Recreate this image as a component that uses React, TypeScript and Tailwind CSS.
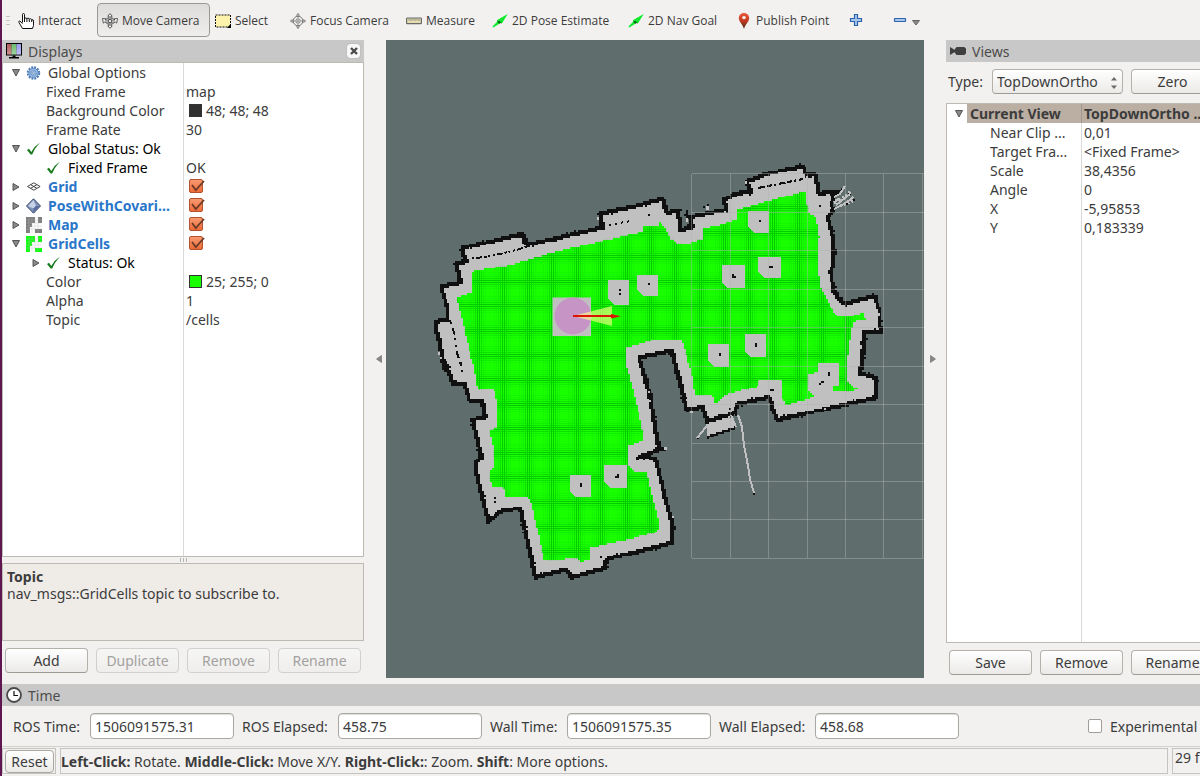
import React from "react";

/* ---------- occupancy map ---------- */

type Point = [number, number];
const CELL = 1.92;
const LEFT = 386;
const TOP = 40;

const WALL: Point[] = [
  [445, 370], [440.7, 350], [436.7, 331.7], [436, 321.7], [448, 320], [446.7, 306.7], [441.7, 290], [443, 286],
  [460.7, 282.3], [457, 268], [456, 264], [466.7, 261], [461.5, 250], [463, 247.7], [523, 234], [526.7, 245],
  [566.7, 235.7], [602.7, 227.7], [600, 213.3], [633, 206.7], [663.3, 199], [667.3, 212.7], [678, 210],
  [680, 230], [692.7, 227.3], [690, 216.7], [726.7, 209.3], [723.3, 200], [736.7, 193.3], [751.7, 191.7],
  [746, 181.7], [770, 173.3], [803, 166], [806, 175], [815, 174], [819, 193], [836.7, 191.7], [831.7, 203],
  [833, 210], [827.3, 216.7], [834, 240], [834, 265], [830, 271.7], [835, 293], [843.3, 304], [874, 296.7],
  [879.3, 310], [880.7, 331.7], [865, 331], [864, 340], [862.7, 360], [860, 373.3], [876, 378], [875, 398],
  [843, 405], [803.3, 414], [776.7, 420], [769, 397.3], [736.7, 404], [736, 412.7], [707, 421.7], [702, 406.7],
  [686.7, 410], [671.7, 350.7], [639.3, 357.3], [650, 396.7], [658, 446.7], [661, 449], [640, 456.7],
  [655, 458], [673, 526.7], [672, 542.7], [606.7, 559.3], [605, 568], [571.7, 577], [566.7, 569], [535, 577],
  [520.7, 508], [500, 511.7], [488, 521.7], [476, 470], [476.7, 461.7], [481.7, 458], [473, 420],
  [485, 416.7], [482.7, 401.7], [470, 401.7], [464, 383], [453, 383], [446, 363],
];

const FREE: Point[] = [
  [471.7, 275], [475, 271], [506.7, 265.7], [553, 252.7], [601.7, 241], [642.7, 231.7], [643, 227], [658, 226.7],
  [659, 222.7], [666.7, 230], [670, 238], [676.7, 243], [690, 243], [702, 239], [702.7, 229], [721.7, 225],
  [736.7, 220], [737, 210], [761.7, 203], [806, 190.7], [808, 211.7], [815.7, 216.7], [819, 236.7],
  [817.7, 266.7], [820, 285], [830, 306.7], [838, 316], [853, 316], [863, 313], [865.7, 320], [852.7, 321.7],
  [848, 350], [846.7, 380], [853, 386.7], [861.7, 386.7], [851.7, 391.7], [833, 391.7], [833, 386.7],
  [838.7, 385], [838.7, 363], [817.7, 363], [817.7, 372], [808, 375], [808, 390], [815, 396.7], [786.7, 405],
  [781, 396.7], [781, 380.7], [758, 380.7], [757.7, 386], [725, 395], [716, 405], [712.7, 396], [695, 395],
  [691.7, 373], [681.7, 340], [653, 340], [626.7, 348], [626.7, 366.7], [633, 390], [643, 431.7], [644, 441],
  [628, 446], [627.5, 465], [635, 471.7], [646.7, 473], [659, 523], [657, 531.7], [626.7, 540], [590, 547.7],
  [589, 560], [580, 562], [576.7, 559], [544, 560], [530, 498], [505, 497], [504, 488], [491.7, 486.7],
  [489, 471.7], [492.7, 468], [492.7, 446.7], [489, 430], [496.7, 428], [496.7, 400], [494, 390], [478, 389],
  [473, 363], [470, 353], [461.7, 318], [456.7, 298], [471.7, 293],
];

const ANNEX: Point[] = [[706, 421], [731.7, 415], [736, 427], [706.7, 437]];

const THIN_WALLS: Point[][] = [
  [[706.7, 437.5], [735, 427.5]],
  [[833, 193], [842, 190]],
  [[656, 449], [666, 449]],
  [[636, 459], [650, 455]],
];

const ISLANDS = [
  [608.3, 280.3, 21, 25], [637.3, 275, 21, 21], [748.3, 211.3, 21, 21.4], [758.3, 257.3, 22.7, 21],
  [721.7, 265.3, 23, 22.7], [708.3, 344, 21, 22.7], [744.7, 334.3, 21, 23], [569.7, 475, 21.3, 22.4],
  [604.3, 465.3, 23, 22.4],
];

const DOTS = [
  [619, 289, 2, 2], [619, 293, 2, 2], [648, 283, 2, 2], [759, 220, 2, 2], [769, 266, 4, 2], [732, 274, 2, 4],
  [734, 276, 2, 2], [719, 353, 2, 3], [755, 343, 2, 4], [580, 483, 2, 4], [615, 476, 4, 2], [617, 474, 2, 2],
  [648, 214, 2, 2], [819, 205, 2, 2], [494, 497, 2, 2], [494, 501, 2, 2], [600, 556, 2, 2], [770, 389, 4, 2],
  [828, 372, 2, 4], [819, 383, 2, 2], [821, 381, 3, 2], [460, 362, 2, 4], [461, 370, 2, 2], [729, 408, 2, 2],
  [753, 492, 2, 3], [697, 437, 2, 2], [686, 210, 2, 8], [684, 214, 2, 2], [707, 204, 2, 4], [703, 206, 2, 2],
  [848, 193, 3, 2], [853, 199, 2, 2], [846, 203, 2, 2],
];

const SCANS = [
  [438, 352, 2, 3], [440, 357, 2, 2], [597, 217, 2, 3], [686, 218, 2, 4], [706, 206, 3, 4], [648, 391, 2, 2],
  [649, 400, 2, 2], [664, 447, 3, 3], [672, 516, 2, 2], [745, 181, 2, 3], [878, 313, 2, 3], [690, 411, 3, 2],
  [824, 408, 2, 2],
];

const edges = (poly: Point[], closed: boolean) => {
  const out: [Point, Point][] = [];
  for (let i = 0; i + 1 < poly.length; i++) out.push([poly[i], poly[i + 1]]);
  if (closed) out.push([poly[poly.length - 1], poly[0]]);
  return out;
};

const inside = (x: number, y: number, segs: [Point, Point][]) => {
  let hit = false;
  for (const [[x1, y1], [x2, y2]] of segs) {
    if (y1 > y !== y2 > y && x < ((x2 - x1) * (y - y1)) / (y2 - y1) + x1) hit = !hit;
  }
  return hit;
};

const near = (x: number, y: number, segs: [Point, Point][], reach: number) =>
  segs.some(([[x1, y1], [x2, y2]]) => {
    const dx = x2 - x1;
    const dy = y2 - y1;
    const t = Math.max(0, Math.min(1, ((x - x1) * dx + (y - y1) * dy) / (dx * dx + dy * dy)));
    return Math.hypot(x - x1 - t * dx, y - y1 - t * dy) < reach;
  });

/* Turns a predicate over map cells into one path of horizontal runs. */
const rasterise = (test: (x: number, y: number) => boolean) => {
  let d = "";
  for (let row = 62; row < 284; row++) {
    const y = TOP + row * CELL;
    let start = -1;
    for (let col = 22; col < 262; col++) {
      const on = test(LEFT + (col + 0.5) * CELL, y + CELL / 2);
      if (on && start < 0) start = col;
      if (!on && start >= 0) {
        const w = ((col - start) * CELL).toFixed(2);
        d += `M${(LEFT + start * CELL).toFixed(2)} ${y.toFixed(2)}h${w}v${CELL}h-${w}z`;
        start = -1;
      }
    }
  }
  return d;
};

const wallEdges = edges(WALL, true);
const freeEdges = edges(FREE, true);
const annexEdges = edges(ANNEX, true);
const thinEdges = THIN_WALLS.flatMap((w) => edges(w, false));
const noise = (x: number, y: number) => {
  const v = Math.sin(x * 12.9 + y * 78.2) * 43758.5;
  return v - Math.floor(v);
};

const KNOWN = rasterise((x, y) => inside(x, y, wallEdges) || inside(x, y, annexEdges));
const CELLS = rasterise((x, y) => inside(x, y, freeEdges));
const BLACK = rasterise(
  (x, y) => near(x, y, wallEdges, noise(x, y) > 0.86 ? 2.9 : 2) || near(x, y, thinEdges, 1.3)
);

const PLAID_PERIOD = 24.57;
const plaid = (offsets: number[]) => {
  let d = "";
  for (let k = 0; k < 18; k++) {
    const cx = Math.round(453.8 + k * PLAID_PERIOD);
    const cy = Math.round(182.6 + k * PLAID_PERIOD);
    for (const o of offsets) d += `M${cx + o} 180h1v390h-1zM440 ${cy + o}h440v1h-440z`;
  }
  return d;
};
const PLAID = [
  { d: plaid([-1, 1]), opacity: 0.85 },
  { d: plaid([-3, 3]), opacity: 0.5 },
  { d: plaid([-5, 5]), opacity: 0.28 },
  { d: plaid([-7, 7, -9]), opacity: 0.14 },
];

const GRID_X = [691.5, 730, 768.5, 807, 845.5, 883.5, 922.5];
const GRID_Y = [173.5, 212, 250.5, 289, 327.5, 366, 404.5, 443, 481.5, 519.5, 558];

function MapView() {
  return (
    <svg viewBox="386 40 538 638" className="block h-full w-full" preserveAspectRatio="xMidYMid slice" role="img" aria-label="Map">
      <defs>
        <clipPath id="free">
          <path d={CELLS} />
        </clipPath>
      </defs>
      <g shapeRendering="crispEdges">
        <path d={KNOWN} fill="#c0c0c0" />
        <path d={CELLS} fill="#19ff00" />
        <g clipPath="url(#free)" fill="#00c400">
          {PLAID.map((p) => (
            <path key={p.opacity} d={p.d} opacity={p.opacity} />
          ))}
        </g>
        <path d={BLACK} fill="#101010" />
        {ISLANDS.map(([x, y, w, h]) => (
          <path key={`${x}-${y}`} d={`M${x} ${y}h${w}v${h}h${-(w - 6)}l-6-6z`} fill="#c0c0c0" />
        ))}
        {DOTS.map(([x, y, w, h]) => (
          <rect key={`${x}-${y}`} x={x} y={y} width={w} height={h} fill="#101010" />
        ))}
        {SCANS.map(([x, y, w, h]) => (
          <rect key={`${x}-${y}`} x={x} y={y} width={w} height={h} fill="#c0c0c0" />
        ))}
        <g fill="none" stroke="#101010" strokeWidth="2">
          <path d="M472 258.500L484 257l16-3 20-5 8-3" strokeDasharray="2 2 6 2 3 1 2 3" />
          <path d="M609 225l24-4.500" strokeDasharray="2 4" />
          <path d="M758 188l45-9" strokeDasharray="7 2 5 2 2 3" />
          <path d="M451 322l4 14 1 14 6 18" strokeDasharray="2 4 7 4 2 5" />
        </g>
        <g fill="none" stroke="#c0c0c0" strokeWidth="2">
          <path d="M738 415l4 12 2 18 4 21 2 13 4 14M731 415l5 12M697 438l5-6 6-8" />
          <path d="M834 197l6-3 5-8M834 209l10-5 7-5 2-2M836 205l14-11" />
        </g>
        <path d="M835 201l10-4 5-5M840 206l13-5M834 203l5-4" stroke="#c0c0c0" strokeWidth="3" strokeDasharray="2 2" fill="none" />
      </g>
      <rect x="552.5" y="297.5" width="38.500" height="38.500" fill="#c0c0c0" />
      <g stroke="#b0b4b4" strokeOpacity=".45" fill="none" shapeRendering="crispEdges">
        {GRID_X.map((x) => (
          <path key={x} d={`M${x} 173.5V558`} />
        ))}
        {GRID_Y.map((y) => (
          <path key={y} d={`M691.5 ${y}H924`} />
        ))}
      </g>
      <circle cx="573" cy="316" r="18.500" fill="#c695c6" />
      <path d="M573 316l39-10v20z" fill="#ffff8c" fillOpacity=".62" />
      <path d="M573 315h38v-1l10 2.300-10 2.300v-1.600h-38z" fill="#dc1400" />
    </svg>
  );
}

/* ---------- icons ---------- */

const ico = "block h-4 w-4 shrink-0";

const HandIcon = () => (
  <svg viewBox="0 0 16 16" className={ico}>
    <path d="M4.500 9.500V1.500q0-1 1-1t1 1V6q0-1 1.200-1t1.200 1q0-.8 1.200-.8T11.300 6.400q0-.6 1.200-.6t1.200.9q1.800-.4 1.800 1.300v4.500L14.500 15.500H4.500L1 9.500Q.3 8 1.800 8L4.500 10.500M6.500 6v3M8.900 6v3M11.300 6.500V9M13.700 7v2" fill="#fff" stroke="#111" />
  </svg>
);
const MoveIcon = () => (
  <svg viewBox="0 0 16 16" className={ico}>
    <g fill="#fff" stroke="#444" strokeWidth=".9">
      <ellipse cx="8" cy="8" rx="4.500" ry="3.200" />
      <path d="M8 .6l2.200 2.600H8.900v9.600h1.300L8 15.400l-2.200-2.600h1.300V3.200H5.800z" />
      <path d="M.5 5.500l3.500.4-.9 1.200h9.800L12 5.900l3.500-.4-.8 4.600-1.200-1H2.500l-1.200 1z" />
    </g>
    <circle cx="8" cy="8" r="1.600" fill="#fff" stroke="#555" />
  </svg>
);
const SelectIcon = () => (
  <svg viewBox="0 0 16 16" className={ico}>
    <rect x=".5" y="2" width="15" height="12" fill="#fdf3ad" stroke="#111" strokeDasharray="2 1" />
    <path d="M16 10.500v4.500h-4z" fill="#000" />
  </svg>
);
const FocusIcon = () => (
  <svg viewBox="0 0 16 16" className={ico}>
    <g fill="none" stroke="#777">
      <circle cx="8" cy="8" r="4.800" />
      <circle cx="8" cy="8" r="2.200" />
      <path d="M8 5V.5L6.800 2v2M8 .5L9.200 2v2M8 11v4.500L6.800 14v-2M8 15.500L9.200 14v-2M5 8H.5L2 6.800h2M.5 8L2 9.200h2M11 8h4.500L14 6.800h-2M15.500 8L14 9.200h-2" strokeWidth=".8" />
    </g>
    <circle cx="8" cy="8" r=".8" fill="#555" />
  </svg>
);
const RulerIcon = () => (
  <svg viewBox="0 0 16 16" className={ico}>
    <rect x=".6" y="5" width="14.800" height="5.600" rx=".6" fill="#e6deb0" stroke="#6a6a6a" strokeWidth="1.200" />
    <path d="M3 5.500v2M5 5.500v2.500M7 5.500v2M9 5.500v2.500M11 5.500v2M13 5.500v2.500" stroke="#777" strokeWidth=".8" />
  </svg>
);
const ArrowIcon = () => (
  <svg viewBox="0 0 16 16" className={ico}>
    <path d="M.5 13.500l4.800-5-.5-1.300L15.700 1 10 10.300l-1.600-.2-7 4.500z" fill="#0bea2b" />
    <path d="M5 8.500l2.400-.5L10 10.300l-1.600-.2-1 .6z" fill="#075c12" />
  </svg>
);
const PinIcon = () => (
  <svg viewBox="0 0 16 16" className={ico}>
    <defs>
      <linearGradient id="pin" x1="0" x2="0" y1="0" y2="1">
        <stop offset="0" stopColor="#ec5a3a" />
        <stop offset=".5" stopColor="#c23b22" />
        <stop offset="1" stopColor="#3c2c14" />
      </linearGradient>
    </defs>
    <path d="M8 0c3.200 0 5.200 2.300 5.200 5.200C13.200 8.800 9 11.500 8 16 7 11.500 2.800 8.800 2.800 5.200 2.800 2.300 4.800 0 8 0z" fill="url(#pin)" />
    <circle cx="8" cy="4.600" r="1.700" fill="#fff" />
  </svg>
);
const PlusIcon = () => (
  <svg viewBox="0 0 16 16" className={ico}>
    <path d="M6.500 2.500h3v4h4v3h-4v4h-3v-4h-4v-3h4z" fill="#a6c6ea" stroke="#2f63ac" strokeWidth="1.200" />
  </svg>
);
const MinusIcon = () => (
  <svg viewBox="0 0 16 16" className={ico}>
    <rect x="2.500" y="6.500" width="11" height="3" rx=".4" fill="#a6c6ea" stroke="#2f63ac" strokeWidth="1.200" />
  </svg>
);
const MonitorIcon = () => (
  <svg viewBox="0 0 16 16" className={ico}>
    <defs>
      <linearGradient id="screen" x1="0" x2="0" y1="0" y2="1">
        <stop offset="0" stopColor="#fff" stopOpacity="0" />
        <stop offset="1" stopColor="#fff" stopOpacity=".35" />
      </linearGradient>
    </defs>
    <rect width="16" height="12.500" fill="#000" />
    <path d="M1 1h4.500v10.500H1z" fill="#b05a5a" />
    <path d="M5.500 1h5v10.500h-5z" fill="#6cbc6c" />
    <path d="M10.500 1H15v10.500h-4.500z" fill="#9c9cf0" />
    <path d="M1 1h14v10.500H1z" fill="url(#screen)" />
    <path d="M6.500 12.500h3v1.500H13v1.500H3V14h3.500z" fill="#000" />
  </svg>
);
const CameraIcon = () => (
  <svg viewBox="0 0 16 16" className={ico}>
    <path d="M0 4l4 2.500h1.200V5.500L6.700 4h7.600L16 5.500v5L14.300 12H6.700l-1.500-1.500v-1H4L0 12z" fill="#3f3f3f" />
  </svg>
);
const ClockIcon = () => (
  <svg viewBox="0 0 16 16" className={ico}>
    <circle cx="8" cy="8" r="7" fill="#fff" stroke="#4a4a4a" strokeWidth="1.800" />
    <path d="M8 4v4.500h4" fill="none" stroke="#111" strokeWidth="1.200" />
  </svg>
);
const GearIcon = () => (
  <svg viewBox="0 0 16 16" className={ico}>
    <circle cx="7.500" cy="8" r="5.700" fill="none" stroke="#4a7ab8" strokeWidth="2" strokeDasharray="1.900 1.084" />
    <circle cx="7.500" cy="8" r="4.700" fill="#9dbde4" stroke="#4a7ab8" strokeWidth=".8" />
    <circle cx="7.500" cy="8" r="2.800" fill="none" stroke="#4a7ab8" strokeDasharray="1 .7" />
    <circle cx="7.500" cy="8" r="1" fill="#fff" stroke="#4a7ab8" strokeWidth=".6" />
  </svg>
);
const CheckIcon = () => (
  <svg viewBox="0 0 16 16" className={ico}>
    <path d="M1 9L3 7.800l2.300 3.200Q8.500 5 14 1.500 8.500 7.500 6.200 13.500H4.600z" fill="#1a7a1e" />
  </svg>
);
const GridIcon = () => (
  <svg viewBox="0 0 16 16" className={ico}>
    <g fill="none" stroke="#444">
      <path d="M1.500 7.500l6.300-3.700 6.300 3.700-6.300 3.700zM4.600 5.600l6.400 3.800M11 5.600L4.600 9.400" />
    </g>
  </svg>
);
const DiamondIcon = () => (
  <svg viewBox="0 0 16 16" className={ico}>
    <path d="M7.500.8l7 7.200-7 7.200-7-7.200z" fill="#7f93bb" stroke="#34436a" />
    <path d="M7.500 2l2.500 6-2.500 2.500L2 8z" fill="#c6d1e6" />
    <path d="M7.500 10.500L10 8l3.500 0-6 6z" fill="#566b9b" />
  </svg>
);
const CellsIcon = ({ color }: { color: string }) => (
  <svg viewBox="0 0 16 16" className={ico}>
    <rect width="16" height="16" fill="#fff" />
    <path d="M0 0h9v6H6v4H4v6H0zM12 0h4v6h-4zM9 12h7v4H9z" fill={color} />
    <path d="M3 0v16M6 0v16M9 0v16M12 0v16M0 3h16M0 6h16M0 9h16M0 12h16" stroke="#bbb" strokeOpacity=".55" strokeWidth=".6" />
  </svg>
);

/* ---------- shared controls ---------- */

const buttonClass =
  "h-[25px] shrink-0 rounded-[4px] border border-[#b4b1ab] border-b-[#9f9c96] bg-gradient-to-b from-white to-[#ebeae8] text-center leading-[22px] text-[#3c3c3c] disabled:border-[#d2d0cd] disabled:from-[#f6f6f5] disabled:to-[#efeeed] disabled:text-[#a3a19e]";

function Expander({ open, label }: { open: boolean; label: string }) {
  return (
    <button type="button" aria-label={label} aria-expanded={open} className="flex h-4 w-4 shrink-0 items-center justify-start pl-0.5">
      <svg viewBox="0 0 8 8" className="block h-2 w-2">
        <path d={open ? "M.5 .5h7L4 7z" : "M1 .5l6 3.500-6 3.500z"} fill="#8a8a8a" stroke="#4a4a4a" strokeWidth=".9" />
      </svg>
    </button>
  );
}

function OrangeCheck({ label }: { label: string }) {
  return (
    <label className="relative ml-[3px] block h-[15px] w-4">
      <input type="checkbox" defaultChecked aria-label={label} className="block h-[14px] w-[14px] appearance-none rounded-[2px] border border-[#b3522c] bg-gradient-to-b from-[#f79a70] to-[#ec6a38]" />
      <svg viewBox="0 0 16 15" className="pointer-events-none absolute inset-0 h-[15px] w-4">
        <path d="M3 6l3.800 5L15 2" fill="none" stroke="#6b3a26" strokeWidth="1.800" />
      </svg>
    </label>
  );
}

type Item = {
  name: string;
  kind: "group" | "child" | "prop";
  icon?: React.ReactNode;
  open?: boolean;
  tone?: string;
  value?: string;
  swatch?: string;
  check?: boolean;
};

const blue = "font-bold text-[#2a77c9]";
const items: Item[] = [
  { name: "Global Options", kind: "group", icon: <GearIcon />, open: true },
  { name: "Fixed Frame", kind: "prop", value: "map" },
  { name: "Background Color", kind: "prop", value: "48; 48; 48", swatch: "bg-[#303030]" },
  { name: "Frame Rate", kind: "prop", value: "30" },
  { name: "Global Status: Ok", kind: "group", icon: <CheckIcon />, open: true, tone: "text-black" },
  { name: "Fixed Frame", kind: "child", icon: <CheckIcon />, tone: "text-black", value: "OK" },
  { name: "Grid", kind: "group", icon: <GridIcon />, open: false, tone: blue, check: true },
  { name: "PoseWithCovari...", kind: "group", icon: <DiamondIcon />, open: false, tone: blue, check: true },
  { name: "Map", kind: "group", icon: <CellsIcon color="#7d7d7d" />, open: false, tone: blue, check: true },
  { name: "GridCells", kind: "group", icon: <CellsIcon color="#0cff0c" />, open: true, tone: blue, check: true },
  { name: "Status: Ok", kind: "child", icon: <CheckIcon />, open: false, tone: "text-black" },
  { name: "Color", kind: "prop", value: "25; 255; 0", swatch: "bg-[#19ff00]" },
  { name: "Alpha", kind: "prop", value: "1" },
  { name: "Topic", kind: "prop", value: "/cells" },
];

const indent = { group: "pl-[7px]", child: "pl-[27px]", prop: "pl-[43px]" };

function PanelHeader({ icon, title, children }: { icon: React.ReactNode; title: string; children?: React.ReactNode }) {
  return (
    <header className="flex h-[22px] shrink-0 items-center gap-1.5 bg-[#c8c8c8] px-1">
      {icon}
      <h2 className="pt-px text-[14px] leading-[21px] text-[#4c4c4c]">{title}</h2>
      {children}
    </header>
  );
}

function DisplaysPanel() {
  return (
    <section className="flex w-[362px] shrink-0 flex-col">
      <PanelHeader icon={<MonitorIcon />} title="Displays">
        <button type="button" aria-label="Close" className="ml-auto flex h-[14px] w-[13px] items-center justify-center rounded-[3px] bg-[#f7f7f7] shadow-[0_0_1px_#777]">
          <svg viewBox="0 0 8 8" className="h-2 w-2">
            <path d="M1 1l6 6M7 1L1 7" stroke="#4a4a4a" strokeWidth="2.400" />
          </svg>
        </button>
      </PanelHeader>
      <div className="flex-1 border border-[#bdbab4] bg-white bg-[linear-gradient(to_right,transparent_180px,#d9d9d9_180px,#d9d9d9_181px,transparent_181px)]">
        <table className="w-full table-fixed border-collapse">
          <colgroup>
            <col className="w-[181px]" />
            <col />
          </colgroup>
          <tbody>
            {items.map((it, i) => (
              <tr key={i} className="h-[19px]">
                <td className="p-0">
                  <div className={`flex h-[19px] items-center overflow-hidden whitespace-nowrap ${indent[it.kind]}`}>
                    {it.kind !== "prop" &&
                      (it.open === undefined ? <span className="w-4 shrink-0" /> : <Expander open={it.open} label={it.name} />)}
                    {it.icon}
                    <span className={`leading-[19px] ${it.kind === "prop" ? "" : "ml-1.5"} ${it.tone ?? ""}`}>{it.name}</span>
                  </div>
                </td>
                <td className="p-0">
                  <div className="flex h-[19px] items-center pl-0.5">
                    {it.swatch && <span className={`mr-1 ml-[3px] h-[13px] w-[13px] border border-[#333] ${it.swatch}`} />}
                    {it.check && <OrangeCheck label={it.name} />}
                    {it.value}
                  </div>
                </td>
              </tr>
            ))}
          </tbody>
        </table>
      </div>
      <div className="flex h-1.5 items-center justify-center gap-0.5">
        <span className="h-1 w-px bg-[#b5b5b5]" />
        <span className="h-1 w-px bg-[#b5b5b5]" />
        <span className="h-1 w-px bg-[#b5b5b5]" />
      </div>
      <div className="h-[78px] shrink-0 border border-[#bdbab4] bg-[#efebe7] px-1 pt-1 leading-[17px]">
        <b>Topic</b>
        <p>nav_msgs::GridCells topic to subscribe to.</p>
      </div>
      <div className="flex gap-2 px-[3px] pt-[7px] pb-[11px]">
        <button type="button" className={`${buttonClass} w-[83px]`}>Add</button>
        <button type="button" disabled className={`${buttonClass} w-[83px]`}>Duplicate</button>
        <button type="button" disabled className={`${buttonClass} w-[83px]`}>Remove</button>
        <button type="button" disabled className={`${buttonClass} w-[83px]`}>Rename</button>
      </div>
    </section>
  );
}

const viewProps = [
  ["Near Clip ...", "0,01"],
  ["Target Fra...", "<Fixed Frame>"],
  ["Scale", "38,4356"],
  ["Angle", "0"],
  ["X", "-5,95853"],
  ["Y", "0,183339"],
];

function ViewsPanel() {
  return (
    <section className="flex w-[254px] shrink-0 flex-col overflow-hidden">
      <PanelHeader icon={<CameraIcon />} title="Views" />
      <div className="flex items-center py-[7px] pl-0.5">
        <label htmlFor="view-type" className="w-11 shrink-0">Type:</label>
        <div className="relative shrink-0">
          <select id="view-type" className={`${buttonClass} w-[131px] appearance-none pl-1 text-left`}>
            <option>TopDownOrtho</option>
          </select>
          <svg viewBox="0 0 6 12" className="pointer-events-none absolute top-2 right-1.5 h-3 w-1.5">
            <path d="M0 3.500L3 0l3 3.500zM0 8.500L3 12l3-3.500z" fill="#6a6a6a" />
          </svg>
        </div>
        <button type="button" className={`${buttonClass} ml-2 w-[83px]`}>Zero</button>
      </div>
      <div className="mt-0.5 flex-1 overflow-hidden border border-r-0 border-[#bdbab4] bg-white bg-[linear-gradient(to_right,transparent_134px,#d9d9d9_134px,#d9d9d9_135px,transparent_135px)]">
        <table className="w-full table-fixed border-collapse whitespace-nowrap">
          <colgroup>
            <col className="w-[135px]" />
            <col />
          </colgroup>
          <tbody>
            <tr className="h-[19px] font-bold">
              <td className="p-0">
                <div className="flex h-[19px] items-center">
                  <span className="w-5 shrink-0 pl-1.5">
                    <Expander open label="Current View" />
                  </span>
                  <span className="flex-1 border-r border-[#a3978d] bg-[#bbaea3] pl-[3px] leading-[19px]">Current View</span>
                </div>
              </td>
              <td className="overflow-hidden bg-[#bbaea3] p-0 pl-0.5 leading-[19px]">TopDownOrtho ...</td>
            </tr>
            {viewProps.map(([name, value]) => (
              <tr key={name} className="h-[19px]">
                <td className="p-0 pl-[43px] leading-[19px]">{name}</td>
                <td className="p-0 pl-0.5 leading-[19px]">{value}</td>
              </tr>
            ))}
          </tbody>
        </table>
      </div>
      <div className="flex gap-2 pt-[7px] pb-[9px] pl-[3px]">
        <button type="button" className={`${buttonClass} w-[83px]`}>Save</button>
        <button type="button" className={`${buttonClass} w-[83px]`}>Remove</button>
        <button type="button" className={`${buttonClass} w-[83px]`}>Rename</button>
      </div>
    </section>
  );
}

const tools = [
  { name: "Interact", icon: <HandIcon />, width: "w-[84px]" },
  { name: "Move Camera", icon: <MoveIcon />, width: "w-[113px]", active: true },
  { name: "Select", icon: <SelectIcon />, width: "w-[75px]" },
  { name: "Focus Camera", icon: <FocusIcon />, width: "w-[116px]" },
  { name: "Measure", icon: <RulerIcon />, width: "w-[86px]" },
  { name: "2D Pose Estimate", icon: <ArrowIcon />, width: "w-[136px]" },
  { name: "2D Nav Goal", icon: <ArrowIcon />, width: "w-[108px]" },
  { name: "Publish Point", icon: <PinIcon />, width: "w-[112px]" },
];

function Toolbar() {
  return (
    <div role="toolbar" className="flex h-10 shrink-0 items-center overflow-hidden pl-1 font-['Open_Sans',sans-serif] text-[12px]">
      <span className="mr-[3px] flex w-1 flex-col gap-[3px]">
        <span className="h-px bg-[#c4c2bf]" />
        <span className="h-px bg-[#c4c2bf]" />
        <span className="h-px bg-[#c4c2bf]" />
      </span>
      {tools.map((t) => (
        <button
          key={t.name}
          type="button"
          aria-pressed={!!t.active}
          className={`flex h-[34px] shrink-0 items-center gap-1 rounded-[4px] border pt-px pl-1 whitespace-nowrap ${t.width} ${
            t.active ? "border-[#9b9893] bg-gradient-to-b from-[#dedcda] to-[#efeeec]" : "border-transparent"
          }`}
        >
          {t.icon}
          {t.name}
        </button>
      ))}
      <button type="button" aria-label="Add tool" className="ml-px p-1"><PlusIcon /></button>
      <button type="button" aria-label="Remove tool" className="ml-5 flex items-center gap-1 p-1">
        <MinusIcon />
        <svg viewBox="0 0 8 6" className="mt-1.5 h-1.5 w-2">
          <path d="M.5.5h7L4 5z" fill="#888" stroke="#666" />
        </svg>
      </button>
    </div>
  );
}

function Splitter({ dir }: { dir: "left" | "right" }) {
  return (
    <button type="button" aria-label={`Collapse ${dir}`} className={`mb-1.5 flex w-[22px] shrink-0 items-center ${dir === "left" ? "justify-end pr-1" : "justify-start pl-1.5"}`}>
      <svg viewBox="0 0 6 8" className="h-2 w-1.5">
        <path d={dir === "left" ? "M5.500.5v7L.5 4z" : "M.5.5v7L5.500 4z"} fill="#888" stroke="#666" strokeWidth=".6" />
      </svg>
    </button>
  );
}

const times = [
  { id: "ros-time", label: "ROS Time:", value: "1506091575.31", width: "w-[69px]" },
  { id: "ros-elapsed", label: "ROS Elapsed:", value: "458.75", width: "w-[88px]" },
  { id: "wall-time", label: "Wall Time:", value: "1506091575.35", width: "w-[69px]" },
  { id: "wall-elapsed", label: "Wall Elapsed:", value: "458.68", width: "w-[88px]" },
];

export default function App() {
  return (
    <div className="flex min-h-screen flex-col overflow-hidden border-l-2 border-[#5e1550] bg-[#f2f1f0] font-['Noto_Sans','Open_Sans',sans-serif] text-[14px] text-[#3c3c3c]">
      <Toolbar />
      <main className="flex flex-1">
        <DisplaysPanel />
        <Splitter dir="left" />
        <div className="relative mb-1.5 min-w-0 flex-1 bg-[#5f6e6c]">
          <div className="absolute inset-0">
            <MapView />
          </div>
        </div>
        <Splitter dir="right" />
        <ViewsPanel />
      </main>
      <section>
        <PanelHeader icon={<ClockIcon />} title="Time" />
        <div className="flex h-10 items-center gap-2 overflow-hidden pl-[11px] whitespace-nowrap">
          {times.map((t) => (
            <React.Fragment key={t.id}>
              <label htmlFor={t.id} className={`shrink-0 ${t.width}`}>{t.label}</label>
              <input id={t.id} type="text" readOnly defaultValue={t.value} className="h-[26px] w-36 shrink-0 rounded-[4px] border border-[#aaa7a2] bg-white px-1 shadow-[inset_0_1px_1px_#ddd]" />
            </React.Fragment>
          ))}
          <label className="ml-auto flex w-28 shrink-0 items-center gap-2">
            <input type="checkbox" className="h-[14px] w-[14px] shrink-0 appearance-none rounded-[2px] border border-[#a09d98] bg-white" />
            Experimental
          </label>
        </div>
      </section>
      <footer className="flex h-[30px] items-start gap-1 border-t border-[#d2d0cd] pt-px whitespace-nowrap">
        <div className="h-[26px] shrink-0 border border-[#c6c4c1] p-px pl-0.5">
          <button type="button" className="h-[23px] w-[49px] rounded-[4px] border border-[#aaa7a2] bg-gradient-to-b from-white to-[#ebeae8] leading-[20px]">Reset</button>
        </div>
        <p className="h-[26px] min-w-0 flex-1 overflow-hidden border border-[#c6c4c1] leading-[25px]">
          <b>Left-Click:</b> Rotate. <b>Middle-Click:</b> Move X/Y. <b>Right-Click:</b>: Zoom. <b>Shift</b>: More options.
        </p>
        <p className="h-[26px] w-7 shrink-0 overflow-hidden border border-r-0 border-[#c6c4c1] pl-0.5 leading-[18px]">29 fps</p>
      </footer>
    </div>
  );
}
